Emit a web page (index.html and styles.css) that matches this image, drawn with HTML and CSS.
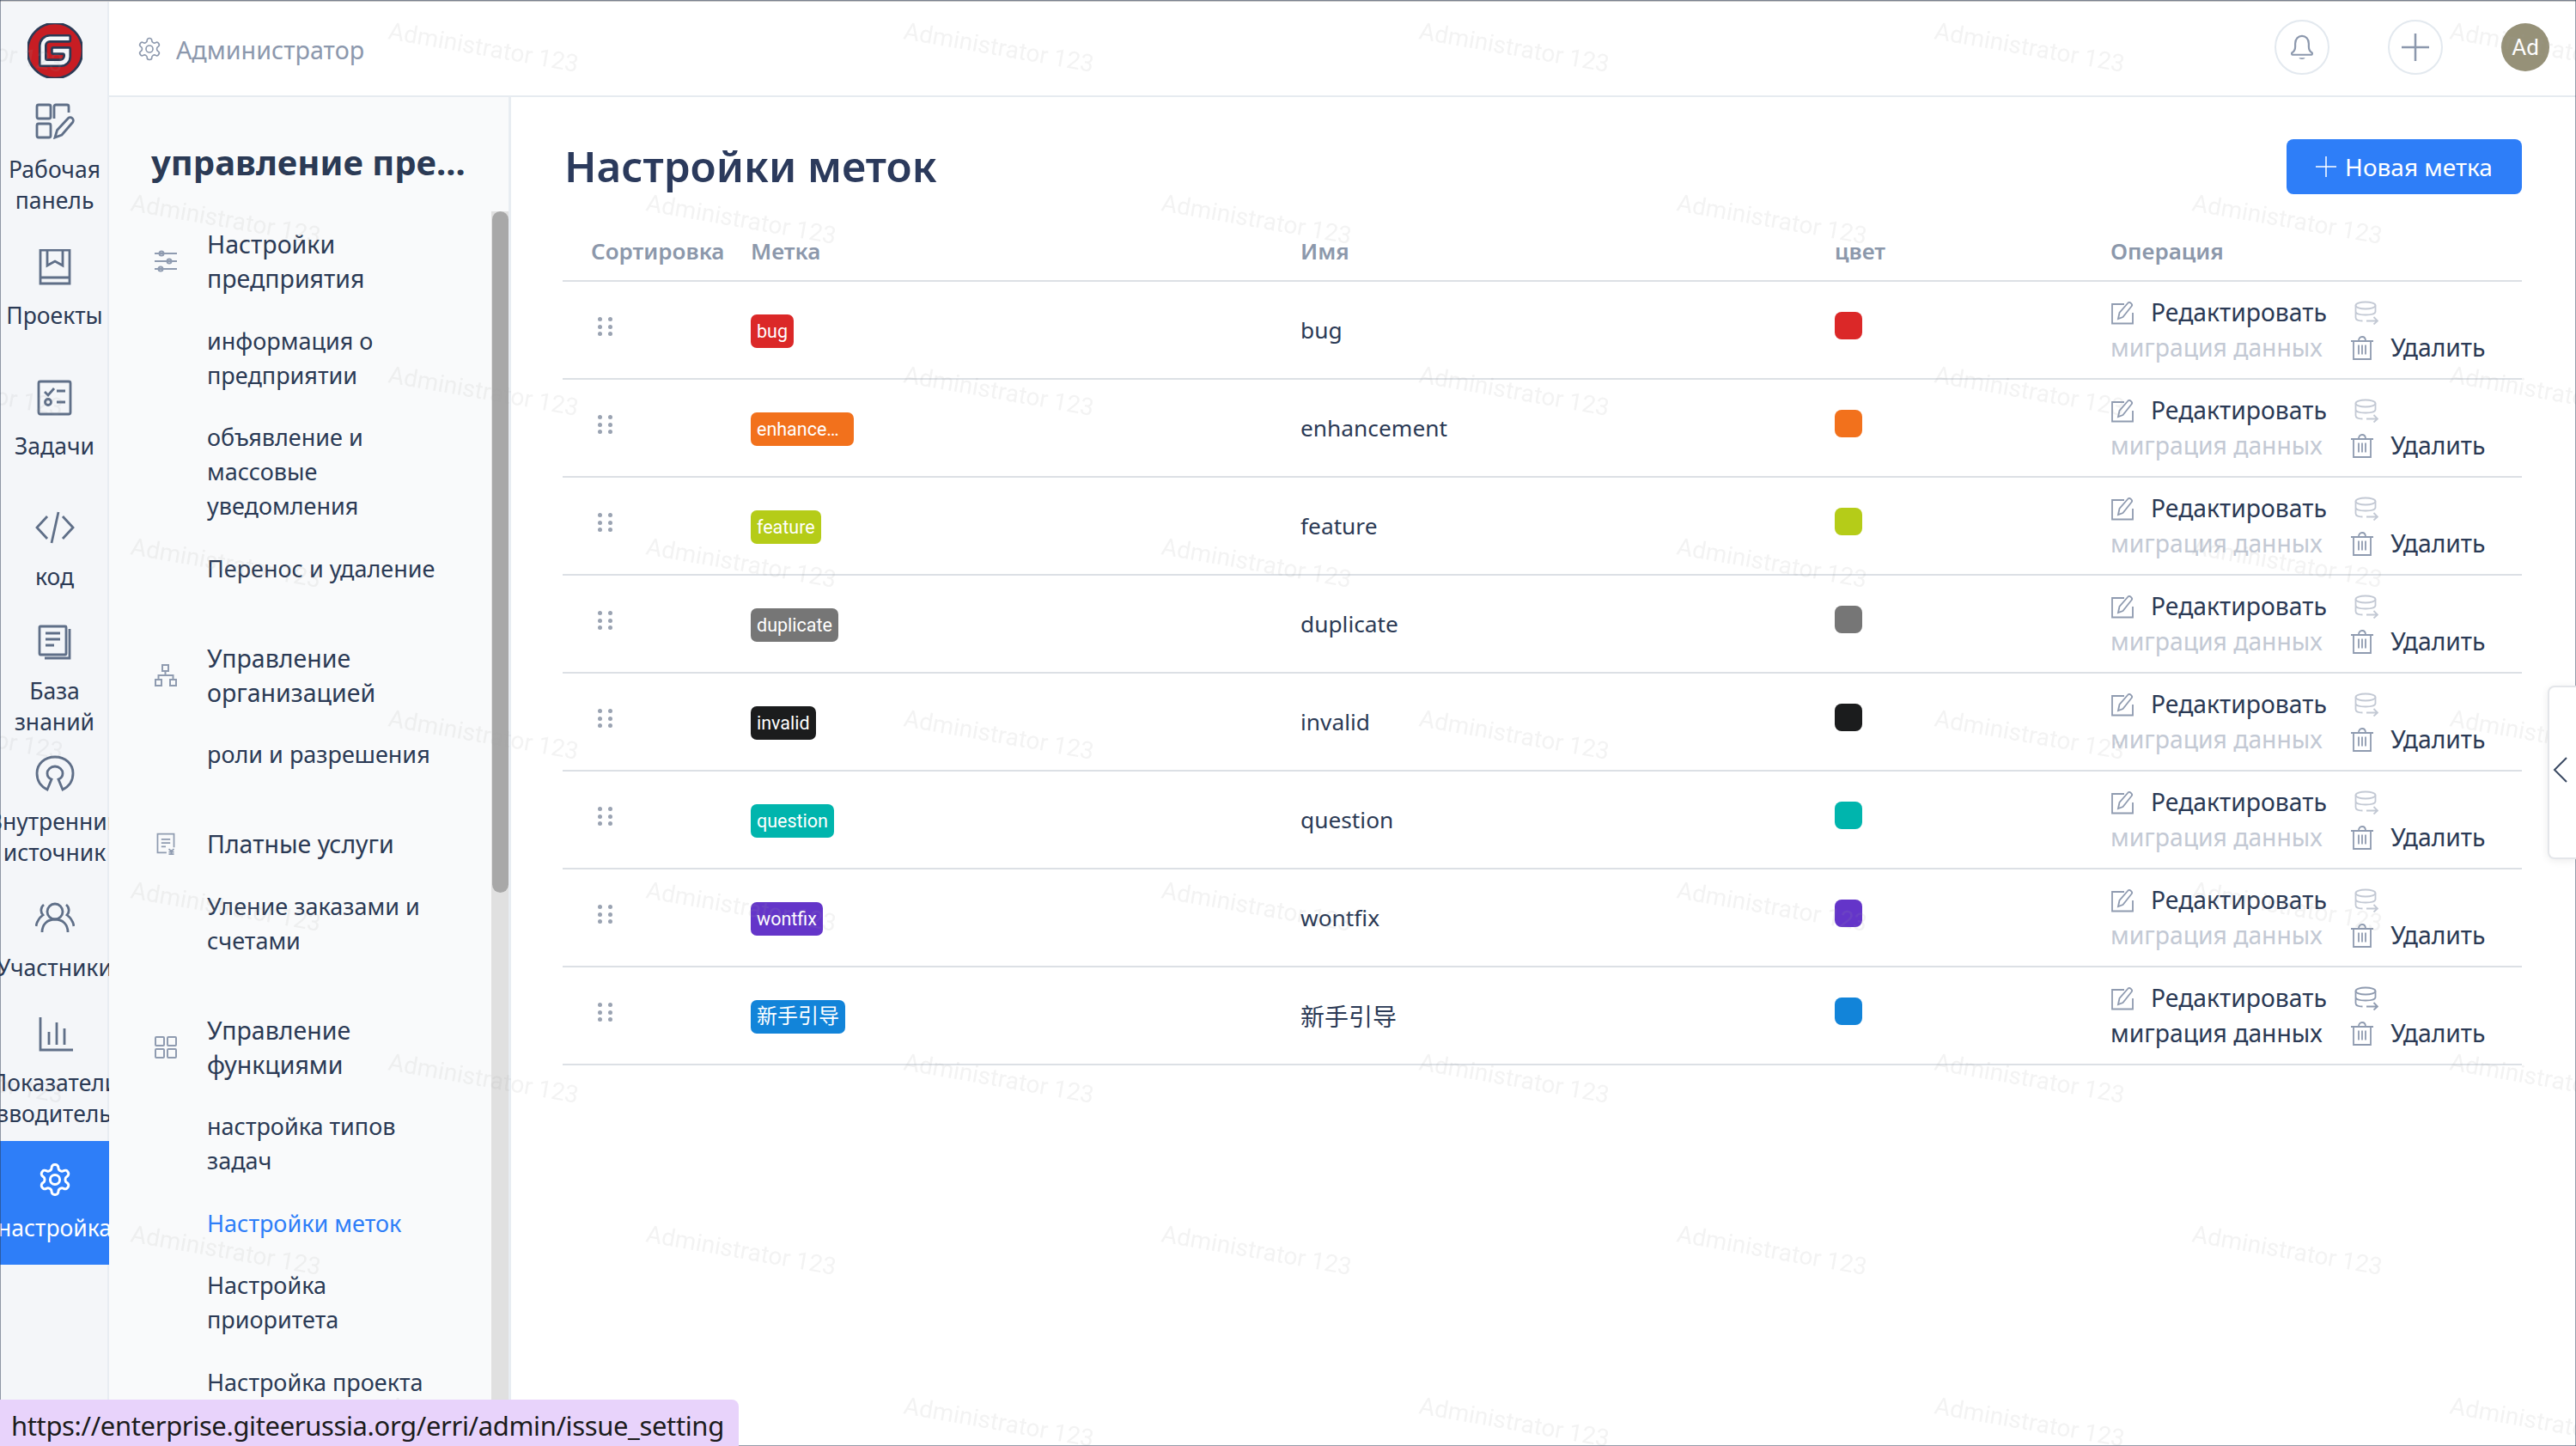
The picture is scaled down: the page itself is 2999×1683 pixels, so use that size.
FILE: index.html
```html
<!DOCTYPE html>
<html lang="ru">
<head>
  <meta charset="UTF-8" />
  <title>Настройки меток</title>
  <link rel="stylesheet" href="styles.css">
</head>
<body>
  <svg class="sprite" width="0" height="0">
    <symbol id="i-gear" viewBox="0 0 24 24">
      <path d="M12.22 2h-.44a2 2 0 0 0-2 2v.18a2 2 0 0 1-1 1.73l-.43.25a2 2 0 0 1-2 0l-.15-.08a2 2 0 0 0-2.73.73l-.22.38a2 2 0 0 0 .73 2.73l.15.1a2 2 0 0 1 1 1.72v.51a2 2 0 0 1-1 1.74l-.15.09a2 2 0 0 0-.73 2.73l.22.38a2 2 0 0 0 2.73.73l.15-.08a2 2 0 0 1 2 0l.43.25a2 2 0 0 1 1 1.73V20a2 2 0 0 0 2 2h.44a2 2 0 0 0 2-2v-.18a2 2 0 0 1 1-1.73l.43-.25a2 2 0 0 1 2 0l.15.08a2 2 0 0 0 2.73-.73l.22-.39a2 2 0 0 0-.73-2.73l-.15-.08a2 2 0 0 1-1-1.74v-.5a2 2 0 0 1 1-1.74l.15-.09a2 2 0 0 0 .73-2.73l-.22-.38a2 2 0 0 0-2.73-.73l-.15.08a2 2 0 0 1-2 0l-.43-.25a2 2 0 0 1-1-1.73V4a2 2 0 0 0-2-2z"/>
      <circle cx="12" cy="12" r="3.2"/>
    </symbol>
    <symbol id="i-edit" viewBox="0 0 28 28">
      <path d="M16 4H2v22.5h24V14"/>
      <path d="M9 21l1.5-7L20.5 2.5a2 2 0 0 1 3 .2l1 1a2 2 0 0 1 0 2.8L14.500 19z"/>
    </symbol>
    <symbol id="i-migrate" viewBox="0 0 28 28">
      <ellipse cx="13" cy="5.500" rx="11.500" ry="4"/>
      <path d="M1.500 5.500v14c0 2.500 3 4 8 4M24.500 5.500v8M1.500 12.500c0 2.500 4.500 4 11.500 4s11.500-1.500 11.500-4"/>
      <path d="M14 23.500h13M22.500 19l4.500 4.500-4.500 4"/>
    </symbol>
    <symbol id="i-trash" viewBox="0 0 28 28">
      <path d="M1 6h26M10 6c0-3 1.500-5 4-5s4 2 4 5M4 6v21h20V6M10 10.500v11M14 10.500v11M18 10.500v11"/>
    </symbol>
  </svg>

  <div class="app">
    <nav class="rail">
      <div class="logo">
        <svg viewBox="0 0 24 24" width="64" height="64"><path fill="#c71d23" d="M11.984 0A12 12 0 0 0 0 12a12 12 0 0 0 12 12 12 12 0 0 0 12-12A12 12 0 0 0 12 0a12 12 0 0 0-.016 0zm6.09 5.333c.328 0 .593.266.592.593v1.482a.594.594 0 0 1-.593.592H9.777c-.982 0-1.778.796-1.778 1.778v5.63c0 .327.266.592.593.592h5.63c.982 0 1.778-.796 1.778-1.778v-.296a.593.593 0 0 0-.592-.593h-4.15a.592.592 0 0 1-.592-.592v-1.482a.593.593 0 0 1 .593-.592h6.815c.327 0 .593.265.593.592v3.408a4 4 0 0 1-4 4H5.926a.593.593 0 0 1-.593-.593V9.778a4.444 4.444 0 0 1 4.445-4.444h8.296Z"/></svg>
      </div>
      <a class="rail-item">
        <svg class="rail-icon" viewBox="0 0 46 42"><rect x="2" y="2" width="16" height="16" rx="2"/><path d="M22 18V4a2 2 0 0 1 2-2h13a2 2 0 0 1 2 2v7"/><rect x="2" y="24" width="16" height="16" rx="2"/><path d="M23 40l2.500-8.500L38 18a3.500 3.500 0 0 1 5.500 4.500L31 37z"/></svg>
        <span>Рабочая<br>панель</span>
      </a>
      <a class="rail-item">
        <svg class="rail-icon" viewBox="0 0 46 42"><path d="M6 40V1h34v39zM6 33h34M14 1v18l9-5 9 5V1"/></svg>
        <span>Проекты</span>
      </a>
      <a class="rail-item">
        <svg class="rail-icon" viewBox="0 0 46 42"><rect x="4" y="2" width="37" height="38" rx="2"/><path d="M11 14l4 4 7-8M25 13h10M25 26h10"/><circle cx="15" cy="26" r="3.500"/></svg>
        <span>Задачи</span>
      </a>
      <a class="rail-item">
        <svg class="rail-icon" viewBox="0 0 46 42"><path d="M14 7L2 20l12 13M32 7l12 13-12 13M27 2l-8 36"/></svg>
        <span>код</span>
      </a>
      <a class="rail-item">
        <svg class="rail-icon" viewBox="0 0 46 42"><rect x="5" y="2" width="31" height="33" rx="1"/><path d="M12 10h17M12 17h17M12 24h10M11 39h29V5"/></svg>
        <span>База<br>знаний</span>
      </a>
      <a class="rail-item">
        <svg class="rail-icon" viewBox="0 0 46 42"><path d="M14 40C6 36 2 29 2 21 2 10 11 2 23 2s21 8 21 19c0 8-4 15-12 19l-5-12c3-1 5-4 5-7 0-4-4-8-9-8s-9 4-9 8c0 3 2 6 5 7z"/></svg>
        <span>Внутренний<br>источник</span>
      </a>
      <a class="rail-item">
        <svg class="rail-icon" viewBox="0 0 46 42"><circle cx="23" cy="12" r="9"/><path d="M8 36c0-9 6-15 15-15s15 6 15 15M10 4c-4 3-4 9-1 12-4 3-7 7-8 13M36 4c4 3 4 9 1 12 4 3 7 7 8 13"/></svg>
        <span>Участники</span>
      </a>
      <a class="rail-item">
        <svg class="rail-icon" viewBox="0 0 46 42"><path d="M6 1v38h38M16 18v15M25 7v26M34 14v19"/></svg>
        <span>Показатели<br>зводитель</span>
      </a>
      <a class="rail-item active">
        <svg class="rail-icon gear" viewBox="0 0 24 24"><use href="#i-gear"/></svg>
        <span>настройка</span>
      </a>
    </nav>

    <div class="workspace">
      <header class="topbar">
        <div class="crumb">
          <svg class="crumb-icon" viewBox="0 0 24 24"><use href="#i-gear"/></svg>
          <span>Администратор</span>
        </div>
        <div class="top-actions">
          <button class="round-btn"><svg viewBox="0 0 32 34" width="28" height="30"><path d="M3 24c3-2 4-4 4-8v-4C7 6 11 2 16 2s9 4 9 10v4c0 4 1 6 4 8 1 1 1 3-1 3H4c-2 0-2-2-1-3z"/><path class="solid" d="M12 31h8c0 1-2 2-4 2s-4-1-4-2z"/></svg></button>
          <button class="round-btn"><svg viewBox="0 0 32 32" width="32" height="32"><path d="M16 0v32M0 16h32"/></svg></button>
          <div class="avatar">Ad</div>
        </div>
      </header>

      <div class="content">
        <aside class="sidebar">
          <div class="side-body">
            <h2 class="side-title">управление пре...</h2>
            <div class="menu">
              <div class="menu-group">
                <div class="menu-head">
                  <svg class="menu-icon" viewBox="0 0 26 26"><path d="M0 4h26M0 13h26M0 22h26"/><circle cx="8" cy="4" r="2.500"/><circle cx="17" cy="13" r="2.500"/><circle cx="7" cy="22" r="2.500"/></svg>
                  <span>Настройки предприятия</span>
                </div>
                <a class="menu-link">информация о предприятии</a>
                <a class="menu-link">объявление и массовые уведомления</a>
                <a class="menu-link">Перенос и удаление</a>
              </div>
              <div class="menu-group">
                <div class="menu-head">
                  <svg class="menu-icon" viewBox="0 0 26 26"><path d="M9 1h7v7H9zM1 18h7v7H1zM18 18h7v7h-7zM12.500 8v5M4.500 18v-5h17v5"/></svg>
                  <span>Управление организацией</span>
                </div>
                <a class="menu-link">роли и разрешения</a>
              </div>
              <div class="menu-group">
                <div class="menu-head">
                  <svg class="menu-icon" viewBox="0 0 26 30"><path d="M14 27H2V2h22v18M7 9h12M7 14h12M7 19h6M17 22l3.500 3 3.500-3M20.500 25v5M17 26h7M17 29h7"/></svg>
                  <span>Платные услуги</span>
                </div>
                <a class="menu-link">Уление заказами и счетами</a>
              </div>
              <div class="menu-group">
                <div class="menu-head">
                  <svg class="menu-icon" viewBox="0 0 26 26"><rect x="1" y="1" width="10" height="10" rx="1"/><rect x="15" y="1" width="10" height="10" rx="1"/><rect x="1" y="15" width="10" height="10" rx="1"/><rect x="15" y="15" width="10" height="10" rx="1"/></svg>
                  <span>Управление функциями</span>
                </div>
                <a class="menu-link">настройка типов задач</a>
                <a class="menu-link current">Настройки меток</a>
                <a class="menu-link">Настройка приоритета</a>
                <a class="menu-link">Настройка проекта</a>
              </div>
            </div>
          </div>
          <div class="scroll-track"><div class="scroll-thumb"></div></div>
        </aside>

        <main class="main">
          <div class="title-row">
            <h1>Настройки меток</h1>
            <button class="primary-btn"><svg viewBox="0 0 24 24" width="24" height="24"><path d="M12 0v24M0 12h24"/></svg>Новая метка</button>
          </div>

          <table class="labels">
            <thead>
              <tr>
                <th class="col-sort">Сортировка</th>
                <th class="col-tag">Метка</th>
                <th class="col-name">Имя</th>
                <th class="col-color">цвет</th>
                <th class="col-ops">Операция</th>
              </tr>
            </thead>
            <tbody>
              <tr>
                <td class="col-sort"><span class="handle"><i></i><i></i><i></i><i></i><i></i><i></i></span></td>
                <td><span class="tag red">bug</span></td>
                <td class="name">bug</td>
                <td><span class="swatch red"></span></td>
                <td class="ops"><a class="op"><svg><use href="#i-edit"/></svg>Редактировать</a> <a class="op off"><svg><use href="#i-migrate"/></svg>миграция данных</a> <a class="op"><svg><use href="#i-trash"/></svg>Удалить</a></td>
              </tr>
              <tr>
                <td class="col-sort"><span class="handle"><i></i><i></i><i></i><i></i><i></i><i></i></span></td>
                <td><span class="tag orange clipped"><b>enhancement</b></span></td>
                <td class="name">enhancement</td>
                <td><span class="swatch orange"></span></td>
                <td class="ops"><a class="op"><svg><use href="#i-edit"/></svg>Редактировать</a> <a class="op off"><svg><use href="#i-migrate"/></svg>миграция данных</a> <a class="op"><svg><use href="#i-trash"/></svg>Удалить</a></td>
              </tr>
              <tr>
                <td class="col-sort"><span class="handle"><i></i><i></i><i></i><i></i><i></i><i></i></span></td>
                <td><span class="tag lime">feature</span></td>
                <td class="name">feature</td>
                <td><span class="swatch lime"></span></td>
                <td class="ops"><a class="op"><svg><use href="#i-edit"/></svg>Редактировать</a> <a class="op off"><svg><use href="#i-migrate"/></svg>миграция данных</a> <a class="op"><svg><use href="#i-trash"/></svg>Удалить</a></td>
              </tr>
              <tr>
                <td class="col-sort"><span class="handle"><i></i><i></i><i></i><i></i><i></i><i></i></span></td>
                <td><span class="tag gray">duplicate</span></td>
                <td class="name">duplicate</td>
                <td><span class="swatch gray"></span></td>
                <td class="ops"><a class="op"><svg><use href="#i-edit"/></svg>Редактировать</a> <a class="op off"><svg><use href="#i-migrate"/></svg>миграция данных</a> <a class="op"><svg><use href="#i-trash"/></svg>Удалить</a></td>
              </tr>
              <tr>
                <td class="col-sort"><span class="handle"><i></i><i></i><i></i><i></i><i></i><i></i></span></td>
                <td><span class="tag black">invalid</span></td>
                <td class="name">invalid</td>
                <td><span class="swatch black"></span></td>
                <td class="ops"><a class="op"><svg><use href="#i-edit"/></svg>Редактировать</a> <a class="op off"><svg><use href="#i-migrate"/></svg>миграция данных</a> <a class="op"><svg><use href="#i-trash"/></svg>Удалить</a></td>
              </tr>
              <tr>
                <td class="col-sort"><span class="handle"><i></i><i></i><i></i><i></i><i></i><i></i></span></td>
                <td><span class="tag teal">question</span></td>
                <td class="name">question</td>
                <td><span class="swatch teal"></span></td>
                <td class="ops"><a class="op"><svg><use href="#i-edit"/></svg>Редактировать</a> <a class="op off"><svg><use href="#i-migrate"/></svg>миграция данных</a> <a class="op"><svg><use href="#i-trash"/></svg>Удалить</a></td>
              </tr>
              <tr>
                <td class="col-sort"><span class="handle"><i></i><i></i><i></i><i></i><i></i><i></i></span></td>
                <td><span class="tag purple">wontfix</span></td>
                <td class="name">wontfix</td>
                <td><span class="swatch purple"></span></td>
                <td class="ops"><a class="op"><svg><use href="#i-edit"/></svg>Редактировать</a> <a class="op off"><svg><use href="#i-migrate"/></svg>миграция данных</a> <a class="op"><svg><use href="#i-trash"/></svg>Удалить</a></td>
              </tr>
              <tr>
                <td class="col-sort"><span class="handle"><i></i><i></i><i></i><i></i><i></i><i></i></span></td>
                <td><span class="tag blue cjk">新手引导</span></td>
                <td class="name cjk">新手引导</td>
                <td><span class="swatch blue"></span></td>
                <td class="ops"><a class="op"><svg><use href="#i-edit"/></svg>Редактировать</a> <a class="op"><svg><use href="#i-migrate"/></svg>миграция данных</a> <a class="op"><svg><use href="#i-trash"/></svg>Удалить</a></td>
              </tr>
            </tbody>
          </table>
        </main>
      </div>
    </div>
  </div>

  <!-- repeated watermark over the whole page -->
  <svg class="watermark" width="100%" height="100%">
    <defs>
      <pattern id="wm" width="600" height="400" patternUnits="userSpaceOnUse">
        <text x="151" y="245" transform="rotate(10 151 245)">Administrator 123</text>
        <text x="451" y="45" transform="rotate(10 451 45)">Administrator 123</text>
        <text x="-149" y="45" transform="rotate(10 -149 45)">Administrator 123</text>
      </pattern>
    </defs>
    <rect width="100%" height="100%" fill="url(#wm)"/>
  </svg>

  <button class="side-tab"><svg viewBox="0 0 18 30" width="18" height="30"><path d="M16 1L2 15l14 14"/></svg></button>
  <div class="status-url">https://enterprise.giteerussia.org/erri/admin/issue_setting</div>
</body>
</html>
```

FILE: styles.css
```css
* {
  margin: 0;
  padding: 0;
  box-sizing: border-box;
}
html, body {
  height: 100%;
  overflow: hidden;
}
body {
  font-family: "Noto Sans", "Noto Sans CJK SC", sans-serif;
  font-size: 28px;
  color: #2b3a55;
  background: #fff;
}
svg {
  fill: none;
  stroke: currentColor;
}
.sprite {
  position: absolute;
}
.app {
  display: flex;
  height: 100%;
  border-top: 2px solid #c8c8c8;
}

/* left icon rail */
.rail {
  width: 127px;
  flex-shrink: 0;
  background: #f4f6f9;
  box-shadow: inset -2px 0 0 #e8edf2;
  overflow: hidden;
  display: flex;
  flex-direction: column;
  gap: 7.75px;
}
.logo {
  height: 104px;
  padding-top: 25px;
  display: flex;
  justify-content: center;
  flex-shrink: 0;
}
.rail-item {
  height: 144px;
  flex-shrink: 0;
  display: flex;
  flex-direction: column;
  align-items: center;
  justify-content: center;
  gap: 17px;
  font-size: 26.500px;
  line-height: 36px;
  text-align: center;
  white-space: nowrap;
  color: #2b3a55;
}
.rail-icon {
  width: 46px;
  height: 42px;
  flex-shrink: 0;
  color: #5f6f88;
  stroke-width: 2.800;
}
.rail-item.active {
  background: #2e7ef8;
  color: #fff;
}
.rail-item.active .rail-icon {
  color: #fff;
}
.rail-icon.gear {
  stroke-width: 1.700;
}

/* top bar */
.workspace {
  flex: 1;
  min-width: 0;
  display: flex;
  flex-direction: column;
}
.topbar {
  height: 111px;
  flex-shrink: 0;
  border-bottom: 2px solid #e6ebf0;
  display: flex;
  align-items: center;
  justify-content: space-between;
  padding: 0 31px 3px 32px;
}
.crumb {
  display: flex;
  align-items: center;
  gap: 16px;
  padding-top: 4px;
  font-size: 28.700px;
  color: #8c98ad;
}
.crumb-icon {
  width: 30px;
  height: 30px;
  stroke-width: 1.300;
}
.top-actions {
  display: flex;
  align-items: center;
  gap: 68px;
}
.round-btn {
  width: 64px;
  height: 64px;
  border: 2px solid #e3e9ef;
  border-radius: 50%;
  background: transparent;
  color: #8c98ad;
  display: flex;
  align-items: center;
  justify-content: center;
  stroke-width: 2.500;
}
.round-btn .solid {
  fill: currentColor;
  stroke: none;
}
.avatar {
  width: 56px;
  height: 56px;
  border-radius: 50%;
  background: #969178;
  color: #fff;
  font-family: Roboto, sans-serif;
  font-size: 26px;
  display: flex;
  align-items: center;
  justify-content: center;
}

/* settings sidebar */
.content {
  flex: 1;
  min-height: 0;
  display: flex;
}
.sidebar {
  width: 468px;
  flex-shrink: 0;
  display: flex;
  background: #f9fafb;
  border-right: 3px solid #e8edf2;
  overflow: hidden;
}
.side-body {
  flex: 1;
  min-width: 0;
}
.side-title {
  font-size: 40px;
  line-height: 54px;
  font-weight: 700;
  color: #2b3a55;
  margin: 49px 0 0 49px;
  white-space: nowrap;
}
.menu {
  margin-top: 48px;
  padding-left: 53px;
  display: flex;
  flex-direction: column;
  gap: 64px;
}
.menu-group {
  display: flex;
  flex-direction: column;
  gap: 32.500px;
}
.menu-head {
  display: flex;
  align-items: center;
  gap: 35px;
  font-size: 28.500px;
  line-height: 40px;
}
.menu-head span,
.menu-link {
  width: 280px;
}
.menu-icon {
  width: 26px;
  height: 26px;
  flex-shrink: 0;
  color: #8f9bb0;
  stroke-width: 2;
}
.menu-link {
  display: block;
  margin-left: 61px;
  line-height: 40px;
  font-size: 27px;
}
.menu-link.current {
  color: #2e7ef8;
}
.scroll-track {
  width: 20px;
  flex-shrink: 0;
  margin-top: 133px;
  background: #e0e0e0;
}
.scroll-thumb {
  height: 793px;
  margin-left: 1px;
  background: #a8a8a8;
  border-radius: 10px;
}

/* labels page */
.main {
  flex: 1;
  min-width: 0;
  padding: 49px 63px 0 60px;
}
.title-row {
  display: flex;
  align-items: center;
  justify-content: space-between;
  height: 64px;
  margin-bottom: 34px;
}
.title-row h1 {
  font-size: 49.400px;
  line-height: 60px;
  font-weight: 600;
  color: #2b3a5c;
  margin: -3px 0 0 2px;
}
.primary-btn {
  width: 274px;
  height: 64px;
  border: 0;
  border-radius: 8px;
  background: #2e7ef8;
  color: #fff;
  font: inherit;
  display: flex;
  align-items: center;
  justify-content: center;
  gap: 10px;
  stroke-width: 1.500;
}
.labels {
  width: 100%;
  table-layout: fixed;
  border-collapse: collapse;
}
.labels th {
  height: 67px;
  padding-bottom: 2px;
  text-align: left;
  font-size: 26px;
  font-weight: 600;
  color: #8c98ab;
  border-bottom: 2px solid #dce0e5;
  white-space: nowrap;
}
.labels td {
  height: 114px;
  border-bottom: 2px solid #dce0e5;
  vertical-align: middle;
}
th.col-sort {
  padding-left: 33px;
}
.col-sort {
  width: 219px;
}
.col-tag {
  width: 640px;
}
.col-name {
  width: 622px;
}
.col-color {
  width: 321px;
}
td.col-sort {
  padding: 0 0 8px 41px;
}
.handle {
  display: grid;
  grid-template-columns: 5px 5px;
  gap: 3.500px 7px;
  width: 17px;
}
.handle i {
  width: 5px;
  height: 5px;
  border-radius: 50%;
  background: #9aa3b2;
}
.tag {
  display: inline-block;
  height: 39px;
  padding: 0 7px;
  border-radius: 7px;
  color: #fff;
  font-family: Roboto, "Noto Sans CJK SC", sans-serif;
  font-size: 21.500px;
  line-height: 39px;
  vertical-align: middle;
}
.tag.cjk {
  font-size: 24px;
}
.tag.clipped {
  width: 120px;
  padding-right: 10px;
}
.tag.clipped b {
  display: block;
  font-weight: 400;
  overflow: hidden;
  white-space: nowrap;
  text-overflow: ellipsis;
}
.labels td.name {
  font-size: 26.300px;
}
.labels td.name.cjk {
  font-size: 28px;
}
.swatch {
  display: block;
  width: 32px;
  height: 32px;
  border-radius: 8px;
  margin-bottom: 11px;
}
.red { background: #db2828; }
.orange { background: #f2711c; }
.lime { background: #b5cc18; }
.gray { background: #767676; }
.black { background: #1b1c1d; }
.teal { background: #00b5ad; }
.purple { background: #6435c9; }
.blue { background: #1284d9; }

.labels td.ops {
  font-size: 28.300px;
  line-height: 41px;
  padding-right: 36px;
  color: #2b3a55;
}
.op svg {
  width: 28px;
  height: 28px;
  margin-right: 19px;
  vertical-align: -4px;
  color: #8f9bb0;
  stroke-width: 1.800;
}
.op:not(:last-child) {
  margin-right: 25px;
}
.op.off {
  color: #c3c9d4;
}
.op.off svg {
  color: #c3c9d4;
}

/* overlays */
.watermark {
  position: absolute;
  inset: 0;
  pointer-events: none;
}
.watermark text {
  font-family: Roboto, sans-serif;
  font-size: 28px;
  fill: rgba(160, 160, 160, 0.12);
  stroke: none;
}
.side-tab {
  position: absolute;
  right: 0;
  top: 798px;
  width: 33px;
  height: 202px;
  background: #fff;
  border: 2px solid #e4e6ea;
  border-right: 0;
  border-radius: 8px 0 0 8px;
  box-shadow: 0 2px 10px rgba(0, 0, 0, 0.08);
  color: #3b4a63;
  display: flex;
  align-items: center;
  padding: 0 0 6px 4px;
  stroke-width: 2;
}
.status-url {
  position: absolute;
  left: 0;
  bottom: 0;
  width: 860px;
  height: 54px;
  padding-left: 13px;
  background: #e8d3fb;
  border-radius: 0 8px 0 0;
  font-size: 31px;
  letter-spacing: -0.370px;
  line-height: 60px;
  color: #1c1c1c;
  white-space: nowrap;
}
```
